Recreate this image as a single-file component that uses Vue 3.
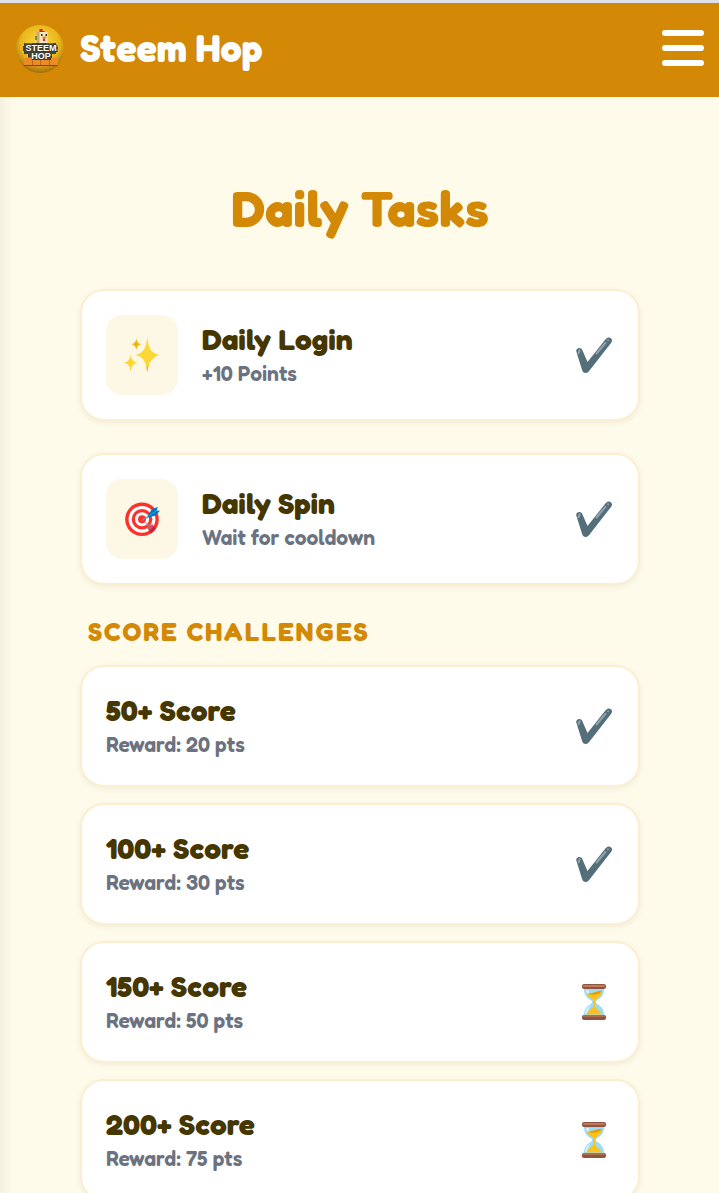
<script setup>
  import { ref } from 'vue';

  const dailyTasks = ref([
    { id: 'login', icon: 'sparkles', title: 'Daily Login', note: '+10 Points', done: true },
    { id: 'spin', icon: 'target', title: 'Daily Spin', note: 'Wait for cooldown', done: true }
  ]);

  const challenges = ref([
    { score: 50, reward: 20, done: true },
    { score: 100, reward: 30, done: true },
    { score: 150, reward: 50, done: false },
    { score: 200, reward: 75, done: false }
  ]);
</script>

<template>
  <!-- shared status icons -->
  <svg class="sprite" aria-hidden="true">
    <symbol id="icon-done" viewBox="0 0 36 36">
      <path fill="#546e7a" d="M.3 14.6C-.2 12.5 1.500 11 3.400 11c1.700 0 2.700 1 3.100 2.600L11.500 25 29.800 2.100C31.300.3 33.300.1 34.900 1.200c1.400 1.200 1.500 3 .3 4.500L13.300 33.800C12.100 35.400 11.200 36 9.700 36c-1.900 0-3-1-3.600-3z" />
      <path stroke="#8fa3ad" stroke-width="2" stroke-linecap="round" d="M20.500 16.500 29.500 5.800M2.600 16.300l1-3" />
      <circle cx="32" cy="3.300" r="1" fill="#8fa3ad" />
    </symbol>
    <symbol id="icon-wait" viewBox="0 0 36 36">
      <path fill="#9adcf8" d="M8 5h20c0 6-3 9-8 12v2c5 3 8 6 8 12H8c0-6 3-9 8-12v-2C11 14 8 11 8 5z" />
      <path fill="#d4effc" d="M10 6h3c0 3 1 5 3 8-4-2-6-5-6-8zM15 21c-4 2-6 5-6 9h3c0-4 1-6 3-9z" />
      <path fill="#fcc21b" d="M10.500 10c6 0 11-3 16-3-1 4-4 6-7.500 9v6c1 4 6 5 6.500 8.500h-15C11 27 16 25 17.500 22v-6c-3-2-5-3-7-6z" />
      <path fill="#e0a005" d="M11 9.800c6 0 9-3 15-3-2 4-8 5-15 3z" />
      <rect x="6" y="0" width="24" height="5" rx="2" fill="#8d5542" />
      <rect x="7" y="1" width="22" height="2" rx="1" fill="#c07a5a" />
      <rect x="6" y="31" width="24" height="5" rx="2" fill="#8d5542" />
      <rect x="7" y="31" width="22" height="2" rx="1" fill="#b06b50" />
    </symbol>
    <symbol id="icon-sparkles" viewBox="0 0 36 36">
      <path fill="#fdd835" d="M23.300.5c1.500 10 3 15.500 12 17.500-9 2-10.500 7.500-12 17.500-1.500-10-3-15.500-12-17.500 9-2 10.500-7.500 12-17.500z" />
      <path fill="#f4b400" d="M35.300 18c-9 2-10.500 7.500-12 17.500-.3-2-.5-3.500-.8-5 3-2 3-9.500 12.800-12.500z" />
      <path fill="#fdd835" d="M6.700 17.700c.9 4.700 2.300 6.800 6.600 8-4.300 1.200-5.700 3.300-6.600 8-.9-4.700-2.300-6.800-6.600-8 4.300-1.200 5.700-3.300 6.600-8z" />
      <path fill="#f4b400" d="M13.300 25.700c-4.300 1.200-5.700 3.300-6.600 8l-.4-2.200c2.500-1.500 1.800-4.500 7-5.800zM12.300 1.500c.7 3.600 1.700 5 5 5.800-3.300.8-4.300 2.200-5 5.800-.7-3.600-1.700-5-5-5.800 3.300-.8 4.300-2.200 5-5.800z" />
    </symbol>
    <symbol id="icon-target" viewBox="0 0 36 36">
      <circle cx="18" cy="18.300" r="16.800" fill="#ff3029" />
      <circle cx="18" cy="18.300" r="13.400" fill="#fff" />
      <circle cx="18" cy="18.300" r="10.300" fill="#ff3029" />
      <circle cx="18" cy="18.300" r="7" fill="#fff" />
      <circle cx="18" cy="18.300" r="4" fill="#ff3029" />
      <path fill="#b71c3a" opacity=".75" d="m23 27 5-4 4 4.500a16 16 0 0 1-5 5z" />
      <path fill="#9b8c99" opacity=".5" d="m19 20 7 3-2 4z" />
      <path stroke="#78909c" stroke-width="1.500" stroke-linecap="round" d="m18.500 18.800 9-5" />
      <path fill="#0277bd" d="m24 14 4-6 6-2-1.500 3.500 3.500.2-4.500 4.800-7 2z" />
      <path stroke="#29a3e8" d="m25 14.500 8-5" />
    </symbol>
  </svg>

  <div class="app">
    <header class="topbar">
      <a class="brand" href="#">
        <svg class="logo" viewBox="0 0 48 48" aria-hidden="true">
          <defs>
            <radialGradient id="coin" cx="50%" cy="38%" r="62%">
              <stop offset="0" stop-color="#ffdc3c" />
              <stop offset=".65" stop-color="#e9b51d" />
              <stop offset="1" stop-color="#a66c0c" />
            </radialGradient>
          </defs>
          <circle cx="24" cy="24" r="24" fill="url(#coin)" />
          <path fill="#d9261c" d="M23.500 4h3v2h2v2h-5z" />
          <path fill="#f5e6bd" d="M20.500 7h11v11h-11z" />
          <path fill="#c6a96c" d="M20.500 7h3v11h-3z" />
          <path fill="#77914c" d="M19 11h2v4h-2z" />
          <path fill="#3b2a16" d="M25 9h1.500v2H25zM29.500 9H31v2h-1.500z" />
          <path fill="#f08a16" d="M26.500 11.500h4v2h-4z" />
          <path fill="#d9261c" d="M27 13.500h2v2.500h-2z" />
          <path fill="#e06c12" d="M22 18h2v2h-2zM27 18h2v2h-2z" />
          <path fill="#41423c" d="M8 18h32v3h2v6h-2v2h-4v6H12v-6H8v-3H7v-5h1z" />
          <path fill="#6d6d62" d="M9 18h7v1H9zM31 18h6v1h-6zM12 32h5v2h-5z" />
          <path fill="#6d9446" d="M40 20h2v2h-2zM40 24h2v2h-2z" />
          <path fill="#8e3f13" d="M8 35h34v6H8z" />
          <path fill="#ef8b25" d="M9 33h7v3H9zM35 33h6v3h-6z" />
          <path fill="#ee8a24" d="M8 35h8v5H8zM16.500 35h8v5h-8zM25 35h8v5h-8zM33.500 35H42v5h-8.500z" />
          <text class="logo-text" x="25" y="26" text-anchor="middle">STEEM</text>
          <text class="logo-text" x="25" y="34" text-anchor="middle">HOP</text>
        </svg>
        <span class="brand-name">Steem Hop</span>
      </a>
      <button class="menu-button" type="button" aria-label="Menu">
        <span></span>
        <span></span>
        <span></span>
      </button>
    </header>

    <main class="content">
      <h1 class="page-title">Daily Tasks</h1>

      <section class="daily">
        <article v-for="task in dailyTasks" :key="task.id" class="card">
          <div class="tile">
            <svg class="icon"><use :href="`#icon-${task.icon}`" /></svg>
          </div>
          <div class="card-text">
            <h3>{{ task.title }}</h3>
            <p>{{ task.note }}</p>
          </div>
          <svg class="icon status"><use :href="task.done ? '#icon-done' : '#icon-wait'" /></svg>
        </article>
      </section>

      <h2 class="section-title">Score Challenges</h2>

      <section class="challenges">
        <article v-for="item in challenges" :key="item.score" class="card">
          <div class="card-text">
            <h3>{{ item.score }}+ Score</h3>
            <p>Reward: {{ item.reward }} pts</p>
          </div>
          <svg class="icon status"><use :href="item.done ? '#icon-done' : '#icon-wait'" /></svg>
        </article>
      </section>
    </main>
  </div>
</template>

<style>
  body {
    background: #fffbeb;
  }
</style>

<style scoped>
  .sprite {
    position: absolute;
    width: 0;
    height: 0;
  }

  .app {
    display: flex;
    flex-direction: column;
    height: 100vh;
    overflow: hidden;
    font-family: Fredoka, Lato, sans-serif;
    font-weight: 700;
    background: #fffbeb;
  }

  .topbar {
    flex: none;
    display: flex;
    align-items: center;
    justify-content: space-between;
    padding: 22px 15px 24px 16px;
    border-top: 3px solid #dde2ec;
    background: #d38905;
  }

  .brand {
    display: flex;
    align-items: center;
    gap: 16px;
    color: #fff;
    text-decoration: none;
  }

  .logo {
    width: 48px;
    height: 48px;
  }

  .logo-text {
    font-family: "Liberation Sans", sans-serif;
    font-size: 9px;
    font-weight: 700;
    fill: #fff;
    stroke: #33342f;
    stroke-width: 1px;
    paint-order: stroke;
  }

  .brand-name {
    padding-bottom: 2px;
    font-size: 38px;
    line-height: 46px;
  }

  .menu-button {
    display: flex;
    flex-direction: column;
    gap: 9px;
    padding: 0 0 2px;
    border: 0;
    background: none;
    cursor: pointer;
  }

  .menu-button span {
    width: 42px;
    height: 6px;
    border-radius: 3px;
    background: #fff;
  }

  .content {
    flex: 1;
    min-height: 0;
    overflow-y: auto;
    scrollbar-width: none;
    padding: 80px 79px 32px 80px;
    background: linear-gradient(to right, #f5f1e1, #fffbeb 14px);
  }

  .page-title {
    margin: 0 0 50px;
    color: #d38905;
    font-size: 51px;
    font-weight: 700;
    line-height: 62px;
    text-align: center;
  }

  .daily {
    display: flex;
    flex-direction: column;
    gap: 32px;
  }

  .challenges {
    display: flex;
    flex-direction: column;
    gap: 16px;
  }

  .section-title {
    margin: 28px 8px 14px;
    color: #d38905;
    font-size: 26px;
    font-weight: 700;
    line-height: 38px;
    letter-spacing: 2px;
    text-transform: uppercase;
  }

  .card {
    display: flex;
    align-items: center;
    gap: 24px;
    padding: 24px;
    border: 2px solid #fcefcf;
    border-radius: 24px;
    background: #fff;
    box-shadow: 0 2px 6px rgba(0, 0, 0, 0.06);
  }

  .tile {
    display: flex;
    align-items: center;
    justify-content: center;
    width: 72px;
    height: 80px;
    border-radius: 16px;
    background: #fdf7e6;
  }

  .icon {
    width: 36px;
    height: 36px;
    fill: none;
  }

  .status {
    width: 40px;
  }

  .card-text {
    flex: 1;
  }

  .card-text h3 {
    margin: 0;
    color: #463600;
    font-size: 30px;
    font-weight: 700;
    line-height: 38px;
  }

  .card-text p {
    margin: 0;
    color: #6b7280;
    font-size: 21px;
    font-weight: 600;
    line-height: 32px;
  }
</style>
